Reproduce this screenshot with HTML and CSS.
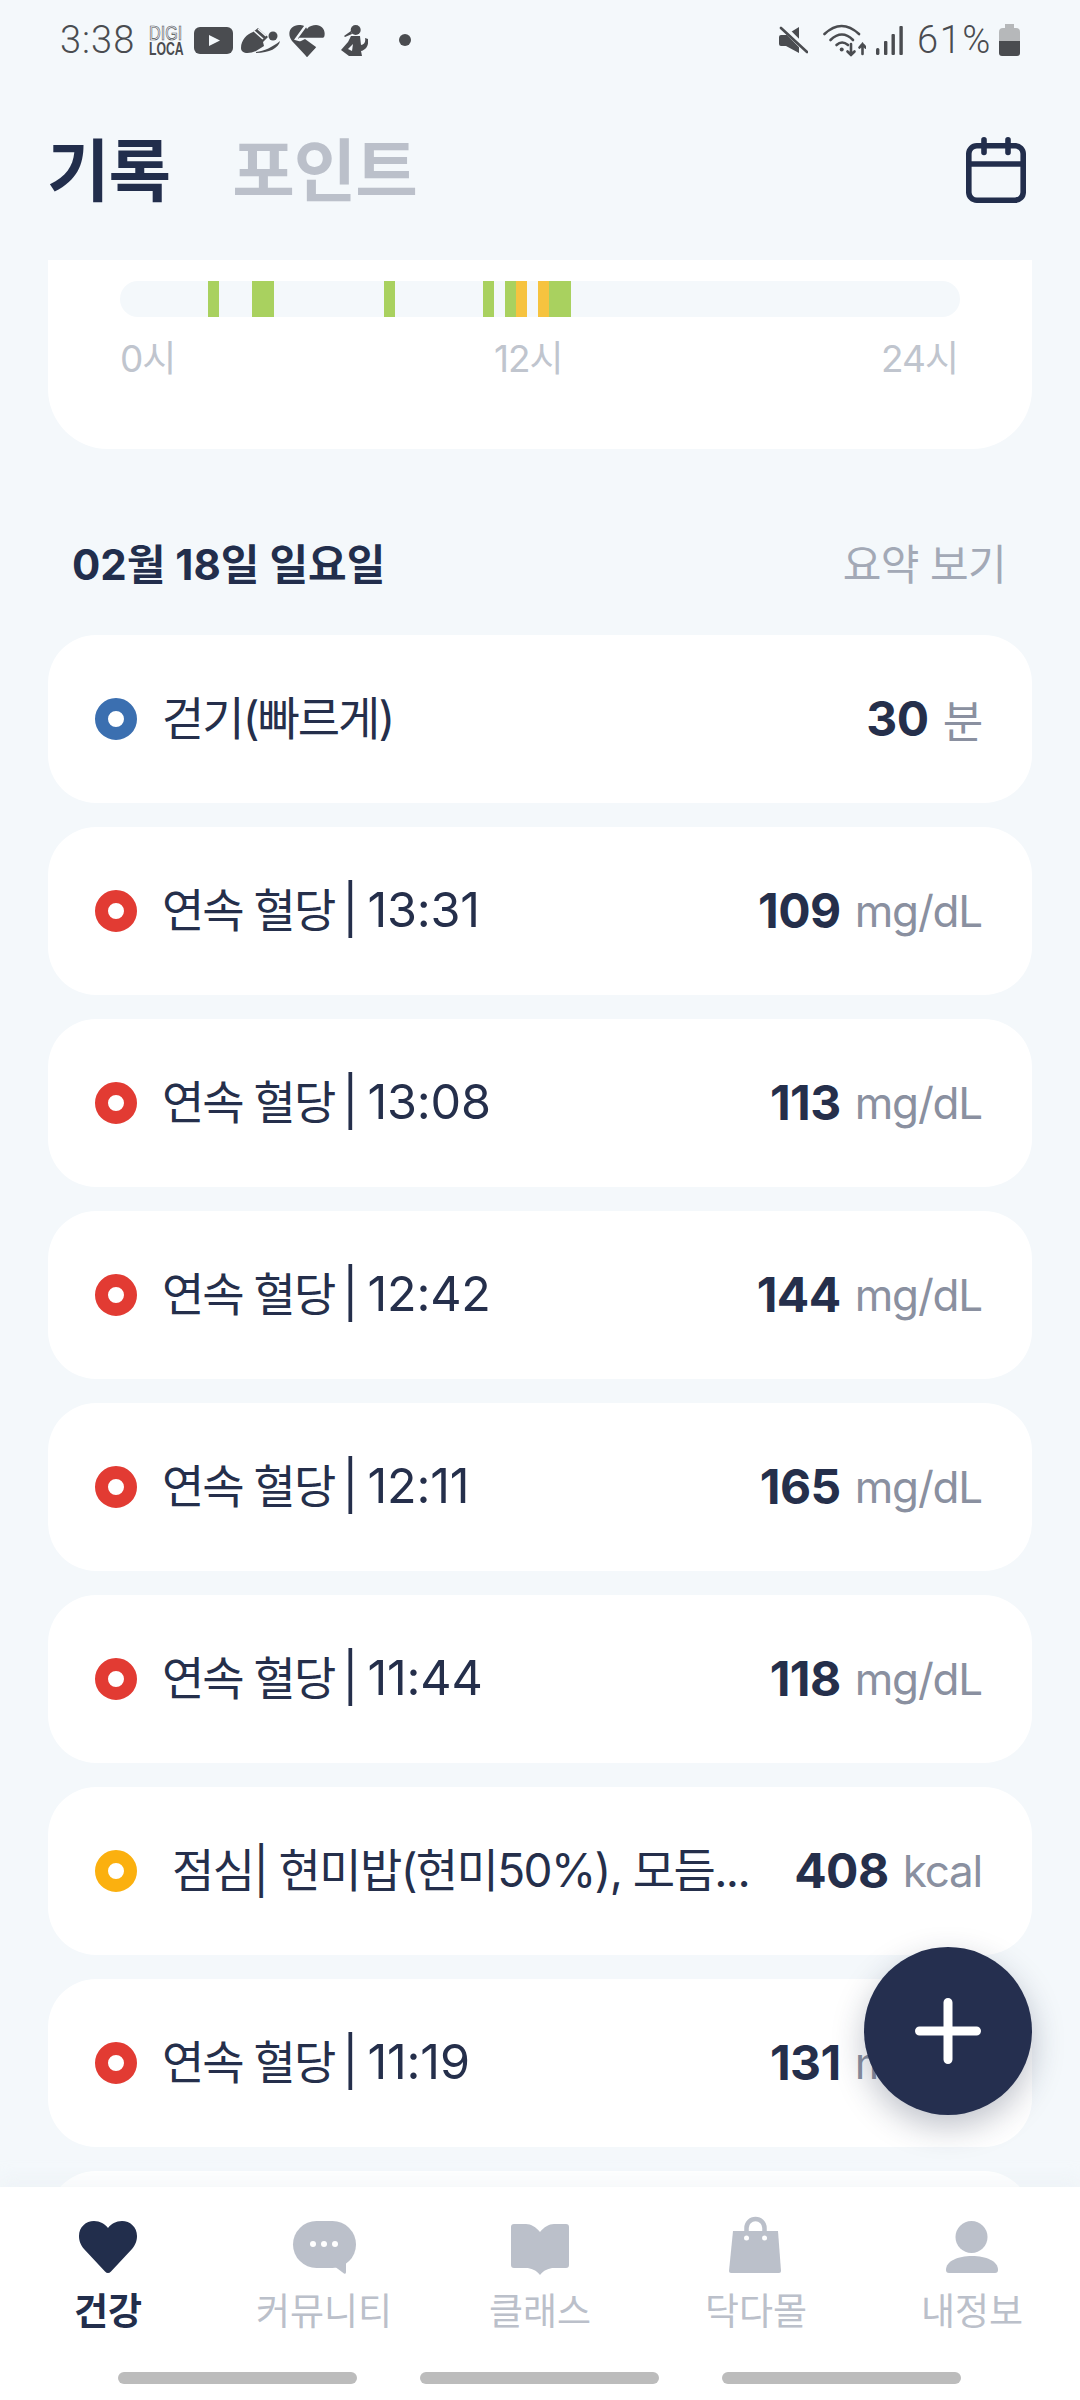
FILE: index.html
```html
<!DOCTYPE html>
<html lang="ko">
<head>
<meta charset="utf-8">
<title>기록</title>
<link rel="stylesheet" href="styles.css">
</head>
<body>
<div class="app">
  <div class="status">
    <span class="clock">3:38</span>
    <span class="digi"><span class="digi-top">DIGI</span><span class="digi-bot">LOCA</span></span>
    <svg class="ic-yt" viewBox="0 0 39 27"><rect width="39" height="27" rx="6" fill="#4a4c50"/><path d="M15 8 L26 13.500 L15 19Z" fill="#f4f8fb"/></svg>
    <svg class="ic-shoe" viewBox="0 0 39 26"><path d="M0 21 C0 13 6 7 12 5 L17 1 L27 10 L22 15 L23 19 L15 24 C8 27 0 27 0 21Z" fill="#4a4c50"/><path d="M13 4 L22 12 M17 2 L25 9" stroke="#f4f8fb" stroke-width="1.600" fill="none"/><circle cx="32" cy="9" r="4.500" fill="#4a4c50"/><path d="M15 25 C23 24 32 20 39 14 C38 21 28 26 15 26Z" fill="#4a4c50"/></svg>
    <svg class="ic-health" viewBox="0 0 36 33"><path d="M18 33 L3 17 C-3 9 2 1 10 1 C14 1 17 2 18 5 C20 2 24 1 27 1 C34 1 39 9 33 17 Z" fill="#4a4c50"/><path d="M18 0 L7 15 L24 20 L36 14 L36 15 L10 15" stroke="#f4f8fb" stroke-width="2.400" fill="none"/><path d="M11 16 H36 L28 24Z" fill="#f4f8fb"/><path d="M8 19 L16 15 L27 23 L18 33Z" fill="#4a4c50"/></svg>
    <svg class="ic-run" viewBox="0 0 27 31"><circle cx="14.700" cy="5" r="5" fill="#4a4c50"/><path d="M10 6 L3 11 L4 12 L11 9Z" fill="#4a4c50"/><path d="M10 11 H19 L20 20 C23 20 25 17 24 13 L27 14 C28 20 25 25 20 26 L21 31 H8 L0 25 L7 17Z" fill="#4a4c50"/><path d="M7 24 L12 19 L11 26Z" fill="#f4f8fb"/></svg>
    <span class="dot"></span>
    <span class="status-gap"></span>
    <svg class="ic-mute" viewBox="0 0 29 28"><path d="M0 11 Q0 9 2 9 H7 L20 1 V27 L7 20 H2 Q0 20 0 18Z" fill="#4a4c50"/><path d="M3 0 L30 27" stroke="#f4f8fb" stroke-width="6" fill="none"/><path d="M2 2 L28 26" stroke="#4a4c50" stroke-width="2.600" fill="none" stroke-linecap="round"/></svg>
    <svg class="ic-wifi" viewBox="0 0 43 33"><g fill="none" stroke="#4a4c50" stroke-width="2.600" stroke-linecap="round"><path d="M1.500 10 Q18.500 -6 36 10"/><path d="M7.500 16 Q19 5 30 16"/><path d="M13.500 21 Q19 16 25 21"/><path d="M28 20 V31 M24.500 27.500 L28 31 L31.500 27.500"/><path d="M39.500 30 V20 M36.500 23.500 L39.500 20 L42.500 23.500"/></g><circle cx="18.700" cy="25.500" r="2" fill="#4a4c50"/></svg>
    <svg class="ic-signal" viewBox="0 0 27 29"><g fill="#4a4c50"><rect x="0" y="22" width="3.400" height="7" rx="1.500"/><rect x="8" y="15" width="3.400" height="14" rx="1"/><rect x="15.500" y="8" width="3.400" height="21" rx="1"/><rect x="23.400" y="0" width="3.400" height="29" rx="1"/></g></svg>
    <span class="pct">61%</span>
    <svg class="ic-batt" viewBox="0 0 21 32"><path d="M6 0 H15 V4 H17 Q21 4 21 8 V17 H0 V8 Q0 4 4 4 H6Z" fill="#b6b8ba"/><path d="M0 17 H21 V29 Q21 32 18 32 H3 Q0 32 0 29Z" fill="#4a4c50"/></svg>
  </div>

  <header class="head">
    <span class="tab tab-on">기록</span>
    <span class="tab">포인트</span>
    <svg class="ic-cal" viewBox="0 0 60 66"><g fill="none" stroke="#222e4c" stroke-width="5.600"><rect x="2.800" y="8.800" width="54.400" height="54.400" rx="8"/><path d="M2.800 27 H57.200"/><path d="M18 2.800 V15.500 M42 2.800 V15.500" stroke-linecap="round"/></g></svg>
  </header>

  <main class="scroll">
    <section class="timeline">
      <div class="bar">
        <i class="seg g" style="left:88px;width:11px"></i>
        <i class="seg g" style="left:132px;width:22px"></i>
        <i class="seg g" style="left:264px;width:11px"></i>
        <i class="seg g" style="left:363px;width:11px"></i>
        <i class="seg g" style="left:385px;width:11px"></i>
        <i class="seg y" style="left:396px;width:11px"></i>
        <i class="seg y" style="left:418px;width:11px"></i>
        <i class="seg g" style="left:429px;width:22px"></i>
      </div>
      <div class="ticks"><span>0시</span><span>12시</span><span>24시</span></div>
    </section>

    <div class="dayhead"><h2>02월 18일 일요일</h2><span>요약 보기</span></div>

    <ul class="rows">
      <li class="row"><i class="ring blue"></i><span class="name">걷기(빠르게)</span><b>30</b><em>분</em></li>
      <li class="row"><i class="ring red"></i><span class="name">연속 혈당 <span class="t">| 13:31</span></span><b>109</b><em>mg/dL</em></li>
      <li class="row"><i class="ring red"></i><span class="name">연속 혈당 <span class="t">| 13:08</span></span><b>113</b><em>mg/dL</em></li>
      <li class="row"><i class="ring red"></i><span class="name">연속 혈당 <span class="t">| 12:42</span></span><b>144</b><em>mg/dL</em></li>
      <li class="row"><i class="ring red"></i><span class="name">연속 혈당 <span class="t">| 12:11</span></span><b>165</b><em>mg/dL</em></li>
      <li class="row"><i class="ring red"></i><span class="name">연속 혈당 <span class="t">| 11:44</span></span><b>118</b><em>mg/dL</em></li>
      <li class="row"><i class="ring amber"></i><span class="name meal">점심| 현미밥(현미50%), 모듬...</span><b>408</b><em>kcal</em></li>
      <li class="row"><i class="ring red"></i><span class="name">연속 혈당 <span class="t">| 11:19</span></span><b>131</b><em>mg/dL</em></li>
      <li class="row"></li>
    </ul>
  </main>

  <nav class="nav">
    <div class="nav-item on"><svg viewBox="0 0 72 60"><path d="M36 57 C35 57 34 56.500 33 55.500 L12 33 C8 28 7 24 7 20 C7 11 14 5 22 5 C28 5 33 8 36 12 C39 8 44 5 50 5 C58 5 65 11 65 20 C65 24 64 28 60 33 L39 55.500 C38 56.500 37 57 36 57Z" fill="#222e4c"/></svg><span>건강</span></div>
    <div class="nav-item"><svg viewBox="0 0 72 60"><rect x="5" y="5" width="63" height="47" rx="23.500" fill="#bbc0ca"/><path d="M46 50 L56 57.500 Q58 58.500 58 56 L58 44Z" fill="#bbc0ca"/><g fill="#fff"><circle cx="25" cy="28" r="3"/><circle cx="36" cy="28" r="3"/><circle cx="47" cy="28" r="3"/></g></svg><span>커뮤니티</span></div>
    <div class="nav-item"><svg viewBox="0 0 72 60"><path d="M10 8 H22 C27 8 32 11 36 16 C40 11 45 8 50 8 H62 Q65 8 65 11 V49 Q65 52 62 52 H50 C45 52 40 54 36 59 C32 54 27 52 22 52 H10 Q7 52 7 49 V11 Q7 8 10 8Z" fill="#bbc0ca"/></svg><span>클래스</span></div>
    <div class="nav-item"><svg viewBox="0 0 72 60"><path d="M13 15 H58 L61 55 Q61 57 59 57 H11 Q9 57 9 55Z" fill="#bbc0ca"/><path d="M26.500 20 V12 A9 9 0 0 1 44.500 12 V20" fill="none" stroke="#bbc0ca" stroke-width="4.500"/><circle cx="26.500" cy="22" r="2.500" fill="#fff"/><circle cx="44.500" cy="22" r="2.500" fill="#fff"/></svg><span>닥다몰</span></div>
    <div class="nav-item"><svg viewBox="0 0 72 60"><circle cx="35.500" cy="21" r="16" fill="#bbc0ca"/><path d="M10 54 C10 45 22 40 36 40 C50 40 62 45 62 54 Q62 57 59 57 H13 Q10 57 10 54Z" fill="#bbc0ca"/></svg><span>내정보</span></div>
    <div class="gestures"><i></i><i></i><i></i></div>
  </nav>

  <button class="fab" aria-label="추가"><svg viewBox="0 0 66 66"><path d="M33 4.500 V61.500 M4.500 33 H61.500" stroke="#fff" stroke-width="9" stroke-linecap="round" fill="none"/></svg></button>
</div>
</body>
</html>
```
FILE: styles.css
```css
* { box-sizing: border-box; margin: 0; padding: 0; }
html, body { width: 1080px; height: 2400px; overflow: hidden; }
body { background: #f4f8fb; font-family: Inter, "Noto Sans CJK KR", sans-serif; color: #252f4b; }
.app { position: relative; width: 1080px; height: 2400px; display: flex; flex-direction: column; overflow: hidden; }

/* status bar */
.status { height: 80px; flex: none; display: flex; align-items: center; padding-left: 60px; padding-right: 60px; color: #4a4c50; }
.status svg { display: block; flex: none; }
.clock, .pct { font-family: Roboto, sans-serif; font-weight: 300; font-size: 38px; line-height: 40px; letter-spacing: 1px; }
.clock { width: 73px; margin-right: 16px; white-space: nowrap; }
.digi { width: 35px; margin-right: 10px; display: flex; flex-direction: column; flex: none; font-family: "Liberation Sans", sans-serif; }
.digi-top { display: block; width: max-content; font-size: 21px; line-height: 17px; color: transparent; -webkit-text-stroke: .7px #4a4c50; transform: scaleX(.77); transform-origin: left center; }
.digi-bot { display: block; width: max-content; font-size: 18px; line-height: 16px; font-weight: 700; color: #4a4c50; transform: scaleX(.68); transform-origin: left center; }
.ic-yt { width: 39px; height: 27px; margin-right: 8px; }
.ic-shoe { width: 39px; height: 26px; margin-right: 9px; }
.ic-health { width: 36px; height: 33px; margin-right: 16px; }
.ic-run { width: 27px; height: 31px; margin-right: 31px; }
.dot { width: 12px; height: 12px; border-radius: 50%; background: #4a4c50; }
.status-gap { flex: 1; }
.ic-mute { width: 29px; height: 28px; margin-right: 15px; }
.ic-wifi { width: 43px; height: 33px; margin-right: 10px; }
.ic-signal { width: 27px; height: 29px; margin-right: 14px; }
.pct { width: 78px; margin-right: 4px; white-space: nowrap; letter-spacing: 1.6px; }
.ic-batt { width: 21px; height: 32px; }

/* header */
.head { height: 180px; flex: none; display: flex; align-items: center; padding: 0 54px 6px 47px; gap: 62px; }
.tab { font-family: "Noto Sans CJK KR", sans-serif; font-weight: 700; font-size: 68px; line-height: 80px; color: #bbc0ca; letter-spacing: -1px; }
.tab-on { color: #222e4c; }
.ic-cal { width: 60px; height: 66px; margin-left: auto; margin-top: 6px; flex: none; }

/* scroller */
.scroll { flex: 1; min-height: 0; overflow: hidden; }
.timeline { height: 189px; margin: 0 48px; padding: 21px 72px 0; background: #fff; border-radius: 0 0 60px 60px; }
.bar { position: relative; height: 36px; background: #f4f8fb; border-radius: 18px; overflow: hidden; }
.seg { position: absolute; top: 0; bottom: 0; }
.seg.g { background: #a9d15f; }
.seg.y { background: #f6c33f; }
.ticks { display: flex; justify-content: space-between; margin: 20px 2px 0 0; font-size: 37px; line-height: 44px; letter-spacing: -1px; color: #c0c5ce; }
.dayhead { display: flex; justify-content: space-between; align-items: center; height: 60px; margin: 82px 74px 44px 72px; }
.dayhead h2 { font-size: 42px; font-weight: 700; color: #222e4c; }
.dayhead span { font-size: 42px; letter-spacing: -.6px; color: #a3a9b6; }

.rows { list-style: none; margin: 0 48px; display: flex; flex-direction: column; gap: 24px; }
.row { height: 168px; flex: none; display: flex; align-items: center; background: #fff; border-radius: 48px; padding: 0 50px 0 47px; }
.ring { width: 42px; height: 42px; flex: none; border-radius: 50%; border: 13px solid; background: #fff; margin-right: 25px; }
.ring.blue { border-color: #3b6fb0; }
.ring.red { border-color: #e23b33; }
.ring.amber { border-color: #fbb00f; }
.name { flex: 1; min-width: 0; font-size: 46px; line-height: 60px; margin-bottom: 2px; white-space: nowrap; color: #252f4b; letter-spacing: -2px; }
.name .t { font-size: 48.500px; letter-spacing: -.2px; word-spacing: -4px; margin-left: -3px; }
.name.meal { padding-left: 10px; letter-spacing: -1.6px; }
.row b { font-size: 48px; font-weight: 700; color: #252f4b; letter-spacing: -.5px; margin-right: 14px; margin-bottom: 2px; }
.row em { font-style: normal; font-size: 44px; letter-spacing: -1.2px; color: #8a90a0; }

/* bottom nav */
.nav { position: relative; height: 213px; flex: none; background: #fff; display: grid; grid-template-columns: repeat(5, 1fr); align-content: start; padding-top: 29px; box-shadow: 0 -8px 16px rgba(230, 235, 240, .35); }
.nav-item { display: flex; flex-direction: column; align-items: center; color: #bbc0ca; }
.nav-item svg { width: 72px; height: 60px; display: block; }
.nav-item span { font-family: "Noto Sans CJK KR", sans-serif; font-size: 37px; line-height: 52px; margin-top: 7px; }
.nav-item.on { color: #222e4c; }
.nav-item.on span { font-weight: 700; }
.gestures { position: absolute; left: 118px; top: 185px; display: flex; gap: 63px; }
.gestures i { display: block; width: 239px; height: 12px; border-radius: 6px; background: #bcbcbc; }

.fab { position: absolute; left: 864px; top: 1947px; width: 168px; height: 168px; border: 0; border-radius: 50%; background: #252f4f; display: flex; align-items: center; justify-content: center; box-shadow: 0 12px 32px rgba(30, 40, 70, .28); }
.fab svg { width: 66px; height: 66px; display: block; }
```
